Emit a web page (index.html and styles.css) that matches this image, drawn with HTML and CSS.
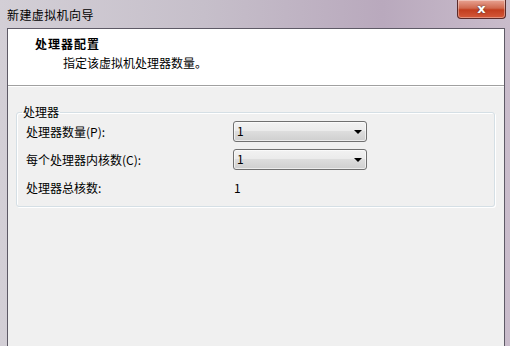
FILE: index.html
```html
<!DOCTYPE html>
<html lang="zh">
<head>
<meta charset="utf-8">
<link rel="stylesheet" href="styles.css">
</head>
<body>
<div class="window">
  <div class="titlebar">
    <span class="title">新建虚拟机向导</span>
    <div class="close"><span>x</span></div>
  </div>
  <div class="client">
    <div class="header">
      <div class="h-title">处理器配置</div>
      <div class="h-sub">指定该虚拟机处理器数量。</div>
    </div>
    <div class="content">
      <fieldset class="group">
        <legend>处理器</legend>
        <div class="row first">
          <span class="label">处理器数量(P):</span>
          <div class="combo"><span>1</span><i class="arrow"></i></div>
        </div>
        <div class="row">
          <span class="label">每个处理器内核数(C):</span>
          <div class="combo"><span>1</span><i class="arrow"></i></div>
        </div>
        <div class="row">
          <span class="label">处理器总核数:</span>
          <span class="value">1</span>
        </div>
      </fieldset>
    </div>
  </div>
</div>
</body>
</html>
```
FILE: styles.css
```css
html, body {
  margin: 0;
  padding: 0;
}
body {
  width: 510px;
  height: 346px;
  overflow: hidden;
  font-family: "Noto Sans CJK SC", "Liberation Sans", sans-serif;
  font-size: 12px;
  color: #000;
}
.window {
  width: 510px;
  height: 346px;
  display: flex;
  flex-direction: column;
  background: linear-gradient(90deg, #d3cfd6 0%, #c6bfca 40%, #b9a9bd 75%, #c9bccb 100%);
}
.titlebar {
  height: 28px;
  display: flex;
  align-items: flex-start;
}
.title {
  margin: 7px 0 0 7px;
  line-height: 16px;
  letter-spacing: 0.4px;
  color: #000;
}
.close {
  margin-left: auto;
  margin-right: 4px;
  width: 47px;
  height: 18px;
  border: 1px solid #5a2a2a;
  border-top: none;
  border-radius: 0 0 4px 4px;
  background: linear-gradient(180deg, #e8a393 0%, #d0694f 45%, #c23d1e 55%, #d4593a 100%);
  box-shadow: inset 0 0 0 1px rgba(255,255,255,0.35);
  display: flex;
  justify-content: center;
  align-items: center;
}
.close span {
  font-family: "DejaVu Sans", sans-serif;
  font-weight: bold;
  font-size: 13px;
  color: #fff;
  line-height: 1;
  margin-top: -2px;
  text-shadow: 0 0 2px #333;
}
.client {
  flex: 1;
  margin: 0 5px 0 7px;
  border: 1px solid #5e5a66;
  border-bottom: none;
  background: #f0f0f0;
  display: flex;
  flex-direction: column;
}
.header {
  height: 57px;
  background: #fff;
  border-bottom: 1px solid #a0a0a0;
  box-shadow: 0 1px 0 #fff;
  padding: 7px 0 0 27px;
  box-sizing: border-box;
}
.h-title {
  font-weight: bold;
  line-height: 16px;
  letter-spacing: 1px;
}
.h-sub {
  margin: 3px 0 0 28px;
  line-height: 16px;
}
.content {
  padding: 19px 9px 0 8px;
}
.group {
  margin: 0;
  padding: 0 0 5px 9px;
  border: 1px solid #d5dfe5;
  border-radius: 3px;
  box-shadow: inset 1px 1px 0 #fff, 1px 1px 0 #fff;
  min-width: 0;
}
.group legend {
  padding: 0 1px;
  margin-left: -4px;
  line-height: 14px;
}
.row {
  display: flex;
  align-items: center;
  height: 28px;
}
.row.first {
  margin-top: -2px;
}
.label {
  width: 207px;
}
.combo {
  width: 129px;
  height: 19px;
  border: 1px solid #707070;
  border-radius: 3px;
  background: linear-gradient(180deg, #f2f2f2 0%, #ebebeb 45%, #dddddd 50%, #cfcfcf 100%);
  box-shadow: inset 0 0 0 1px rgba(255,255,255,0.6);
  display: flex;
  align-items: center;
  padding: 0 0 0 3px;
  position: relative;
}
.combo span {
  line-height: 14px;
}
.arrow {
  position: absolute;
  right: 4px;
  top: 8px;
  width: 0;
  height: 0;
  border-left: 4px solid transparent;
  border-right: 4px solid transparent;
  border-top: 4px solid #000;
}
.value {
  padding-left: 1px;
}
```
